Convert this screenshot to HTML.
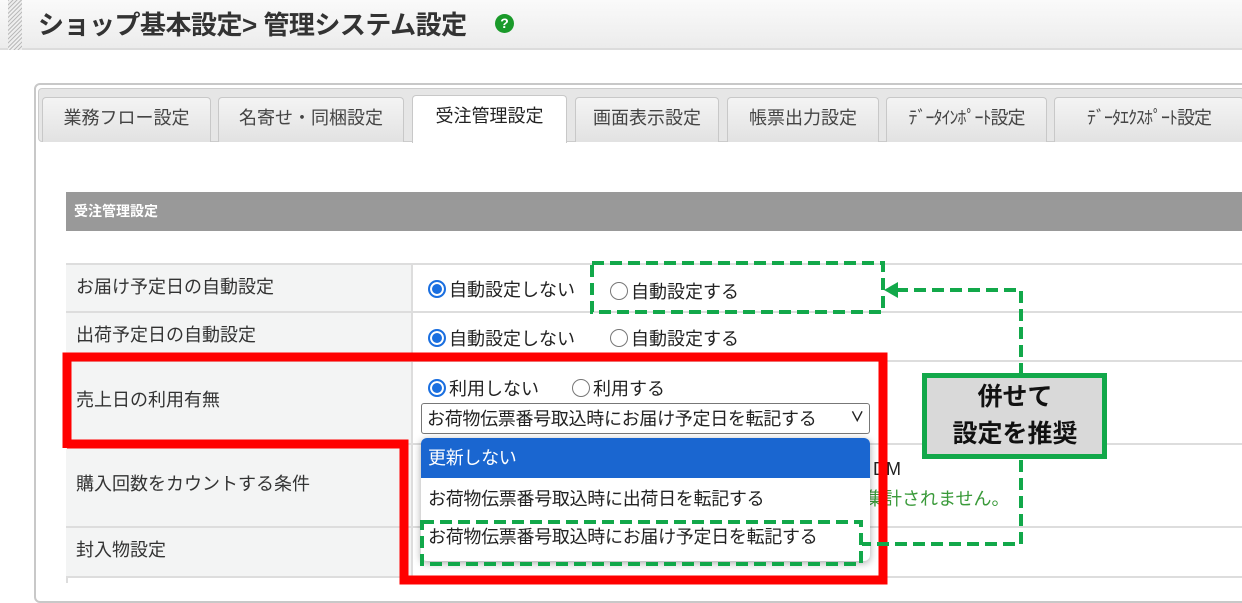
<!DOCTYPE html>
<html><head><meta charset="utf-8"><style>
*{margin:0;padding:0;box-sizing:border-box}
body{width:1242px;height:587px;overflow:hidden;background:#fff;position:relative;font-family:"Liberation Sans","Noto Sans CJK JP",sans-serif;color:#333}
.a{position:absolute}
.tab{position:absolute;top:97px;height:45px;background:linear-gradient(#f4f4f4,#e2e2e2);border:1px solid #c8c8c8;border-bottom:none;border-radius:4px 4px 0 0;font-size:18px;color:#444;text-align:center;line-height:40px;white-space:nowrap}
.lab{position:absolute;left:66px;width:345px;background:#f3f4f4;font-size:18px;padding-left:10px;border-bottom:2px solid #ddd;color:#333}
.val{position:absolute;left:411px;right:0;border-bottom:2px solid #ddd;border-left:2px solid #ddd;background:#fff}
.r{position:absolute;font-size:18px;color:#222;white-space:nowrap}
.rad{display:inline-block;width:18px;height:18px;border-radius:50%;border:1.5px solid #777;vertical-align:-2px;margin-right:3px;background:#fff}
.on{border:2px solid #1a6fe0;box-shadow:inset 0 0 0 2px #fff;background:#1a6fe0}
</style></head><body>
<div class="a" style="left:0;top:0;width:1242px;height:50px;background:linear-gradient(#fafafa,#ececec);border-bottom:2px solid #dcdcdc"></div>
<div class="a" style="left:8px;top:0;width:14px;height:50px;background:repeating-linear-gradient(135deg,#bbb 0 1px,#eee 1px 3px)"></div>
<div class="a" style="left:38px;top:5px;font-size:26px;font-weight:bold;color:#333;letter-spacing:-0.5px;white-space:nowrap">ショップ基本設定&gt; 管理システム設定</div>
<div class="a" style="left:495px;top:14px;width:19px;height:19px;border-radius:50%;background:#1a9a2a;color:#fff;font-size:14px;font-weight:bold;text-align:center;line-height:19px">?</div>

<div class="a" style="left:34px;top:83px;width:1220px;height:520px;border:2px solid #c8c8c8;border-radius:6px"></div>
<div class="a" style="left:38px;top:88px;width:1210px;height:54px;background:#e6e6e6;border:1px solid #ccc;border-radius:4px"></div>
<div class="tab" style="left:42px;width:169px">業務フロー設定</div>
<div class="tab" style="left:218px;width:186px">名寄せ・同梱設定</div>
<div class="tab" style="left:412px;width:155px;top:95px;height:48px;background:#fff;color:#222">受注管理設定</div>
<div class="tab" style="left:575px;width:144px">画面表示設定</div>
<div class="tab" style="left:727px;width:152px">帳票出力設定</div>
<div class="tab" style="left:886px;width:161px;font-size:18px;letter-spacing:-1px">ﾃﾞｰﾀｲﾝﾎﾟｰﾄ設定</div>
<div class="tab" style="left:1054px;width:190px;font-size:18px;letter-spacing:-1px">ﾃﾞｰﾀｴｸｽﾎﾟｰﾄ設定</div>

<div class="a" style="left:66px;top:192px;width:1176px;height:39px;background:#999;color:#fff;font-size:14px;font-weight:bold;padding:9px 8px">受注管理設定</div>

<div class="a" style="left:66px;top:263px;width:1176px;border-top:2px solid #ddd"></div>
<div class="a" style="left:66px;top:263px;width:2px;height:320px;background:#ddd"></div>
<div class="lab" style="top:265px;height:48px;line-height:44px">お届け予定日の自動設定</div>
<div class="val" style="top:265px;height:48px"></div>
<div class="lab" style="top:313px;height:49px;line-height:45px">出荷予定日の自動設定</div>
<div class="val" style="top:313px;height:49px"></div>
<div class="lab" style="top:362px;height:83px;line-height:76px">売上日の利用有無</div>
<div class="val" style="top:362px;height:83px"></div>
<div class="lab" style="top:445px;height:83px;line-height:78px">購入回数をカウントする条件</div>
<div class="val" style="top:445px;height:83px"></div>
<div class="lab" style="top:528px;height:50px;line-height:44px">封入物設定</div>
<div class="val" style="top:528px;height:50px"></div>

<div class="r" style="left:428px;top:276px"><span class="rad on"></span>自動設定しない</div>
<div class="r" style="left:610px;top:278px"><span class="rad"></span>自動設定する</div>
<div class="r" style="left:428px;top:325px"><span class="rad on"></span>自動設定しない</div>
<div class="r" style="left:610px;top:325px"><span class="rad"></span>自動設定する</div>
<div class="r" style="left:428px;top:375px"><span class="rad on"></span>利用しない</div>
<div class="r" style="left:572px;top:375px"><span class="rad"></span>利用する</div>
<div class="a" style="left:421px;top:403px;width:449px;height:31px;border:1.5px solid #777;border-radius:3px;font-size:18px;padding:1px 5px;color:#222;white-space:nowrap;letter-spacing:-0.3px">お荷物伝票番号取込時にお届け予定日を転記する<span style="position:absolute;right:5px;top:3px;font-size:14px;font-weight:bold">∨</span></div>
<div class="r" style="left:873px;top:459px;font-size:18px">DM</div>
<div class="r" style="left:866px;top:485px;color:#3a9a3a">集計されません。</div>

<div class="a" style="left:421px;top:438px;width:449px;height:123px;background:#fff;border-radius:6px;box-shadow:0 2px 8px rgba(0,0,0,.35);overflow:hidden;letter-spacing:-0.3px;white-space:nowrap">
<div style="height:40px;background:#1a66d0;color:#fff;font-size:18px;padding:6px 7px">更新しない</div>
<div style="height:40px;font-size:18px;padding:7px 7px;color:#222">お荷物伝票番号取込時に出荷日を転記する</div>
<div style="height:40px;font-size:18px;padding:5px 7px;color:#222">お荷物伝票番号取込時にお届け予定日を転記する</div>
</div>

<svg class="a" style="left:0;top:0" width="1242" height="587">
<path d="M67 448 V357 H883 V580 H404 V444 H67" fill="none" stroke="#f00" stroke-width="9"/>
<g fill="none" stroke="#12a84a" stroke-width="4" stroke-dasharray="12 6">
<rect x="592" y="263" width="291" height="49"/>
<rect x="422" y="522" width="439" height="42"/>
<path d="M896 290 H1021 V373 M1021 460 V544 H862"/>
</g>
<path d="M884 290 L898 282 V298 Z" fill="#12a84a"/>
<rect x="924.5" y="375.5" width="180" height="81" fill="#d9d9d9" stroke="#12a84a" stroke-width="5"/>
<text x="1015" y="405" text-anchor="middle" font-size="25" font-weight="bold" fill="#111" font-family="Liberation Sans,Noto Sans CJK JP,sans-serif">併せて</text>
<text x="1015" y="442" text-anchor="middle" font-size="25" font-weight="bold" fill="#111" font-family="Liberation Sans,Noto Sans CJK JP,sans-serif">設定を推奨</text>
</svg>
</body></html>
